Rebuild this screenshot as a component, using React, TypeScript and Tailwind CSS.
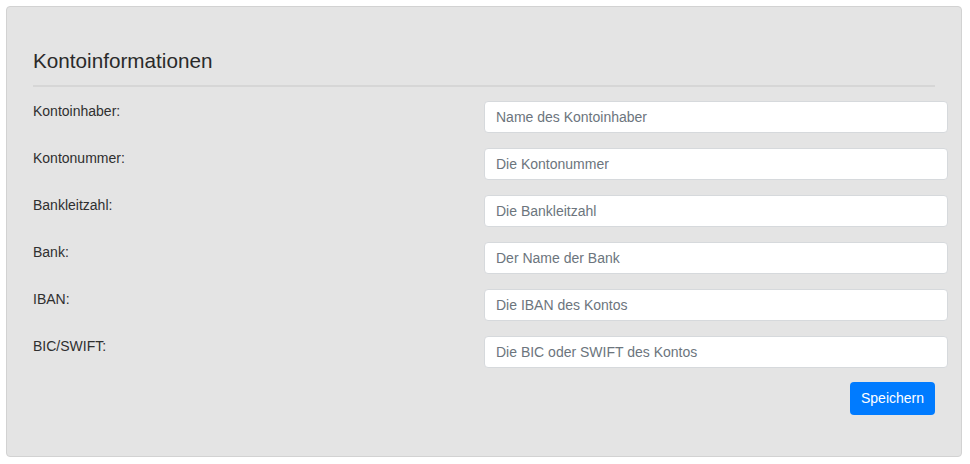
const fields = [
  { label: "Kontoinhaber:", placeholder: "Name des Kontoinhaber" },
  { label: "Kontonummer:", placeholder: "Die Kontonummer" },
  { label: "Bankleitzahl:", placeholder: "Die Bankleitzahl" },
  { label: "Bank:", placeholder: "Der Name der Bank" },
  { label: "IBAN:", placeholder: "Die IBAN des Kontos" },
  { label: "BIC/SWIFT:", placeholder: "Die BIC oder SWIFT des Kontos" },
];

export default function App() {
  return (
    <div className="min-h-[464px] bg-white pl-[6px] pt-[6px] font-['Liberation_Sans',Arial,sans-serif] text-[#333]">
      <div className="w-[956px] h-[451px] rounded-[4px] border border-[#d2d2d2] bg-[#e4e4e4] px-[26px] pt-[42px]">
        <h2 className="text-[20.7px] leading-[24px] font-normal text-[#2a2a2a]">Kontoinformationen</h2>
        <hr className="mt-[12px] border-0 border-t-2 border-[#d6d6d6]" />

        <form className="mt-[14px]" onSubmit={(e) => e.preventDefault()}>
          {fields.map((f) => (
            <div key={f.label} className="flex mb-[15px]">
              <label className="w-[451px] shrink-0 text-[14px] leading-[21px] text-[#2f2f2f]">
                {f.label}
              </label>
              <input
                type="text"
                placeholder={f.placeholder}
                className="flex-1 mr-[-13px] h-[32px] rounded-[4px] border border-[#d6d9dc] bg-white px-[11px] text-[14px] text-[#495057] placeholder-[#6c757d] outline-none"
              />
            </div>
          ))}
          <div className="flex justify-end -mt-[1px]">
            <button
              type="submit"
              className="h-[33px] w-[85px] rounded-[4px] bg-[#007bff] text-[14px] text-white"
            >
              Speichern
            </button>
          </div>
        </form>
      </div>
    </div>
  );
}
